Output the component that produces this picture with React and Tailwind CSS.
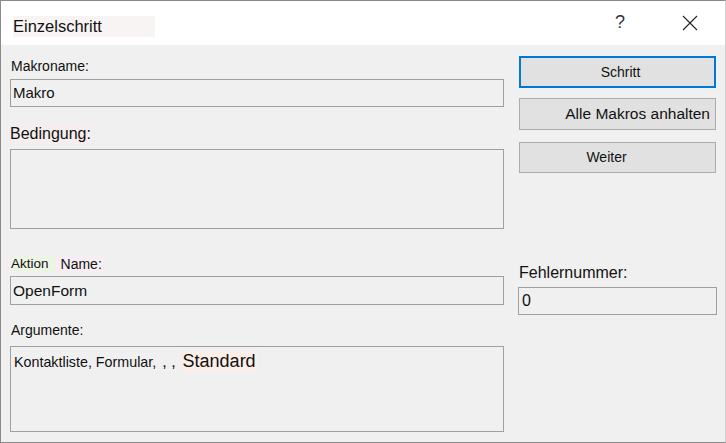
export default function App() {
  const font = { fontFamily: '"Liberation Sans", Arial, sans-serif' }
  return (
    <div
      className="w-[726px] h-[443px] bg-[#f0f0f0] border border-[#8a8a8a] border-r-[#d0d0d0] flex flex-col overflow-hidden text-[#111]"
      style={font}
    >
      {/* Title bar */}
      <div className="h-[44px] shrink-0 bg-white flex items-center">
        <div className="ml-[12px] mt-[6px] h-[21px] w-[142px] bg-[#f8f4f4] flex items-center">
          <span className="text-[16.5px] leading-none">Einzelschritt</span>
        </div>
        <span className="ml-auto mt-[-2px] text-[18px] leading-none text-[#333]">?</span>
        <svg className="ml-[57px] mr-[27px]" width="16" height="16" viewBox="0 0 16 16">
          <path d="M1 1 L15 15 M15 1 L1 15" stroke="#222" strokeWidth="1.1" />
        </svg>
      </div>

      {/* Body */}
      <div className="flex flex-1">
        {/* Left column */}
        <div className="ml-[9px] w-[494px] flex flex-col">
          <div className="mt-[13px] h-[16px] text-[14px] leading-[16px] ml-[1px]">Makroname:</div>
          <div className="mt-[5px] h-[28px] border border-[#a0a0a0] flex items-center px-[2px]">
            <span className="text-[15px]">Makro</span>
          </div>

          <div className="mt-[18px] h-[18px] text-[16px] leading-[18px] w-fit bg-[#f6eeee]">Bedingung:</div>
          <div className="mt-[6px] h-[80px] border border-[#a0a0a0]" />

          <div className="mt-[27px] h-[16px] text-[13.5px] leading-[16px] ml-[1px] flex">
            <span className="bg-[#ecf4e4] pr-[7px]">Aktion</span>
            <span className="bg-[#f7eef3] pl-[5px] pr-[3px] text-[14px]">Name:</span>
          </div>
          <div className="mt-[4px] h-[29px] border border-[#a0a0a0] flex items-center px-[2px]">
            <span className="text-[15.5px]">OpenForm</span>
          </div>

          <div className="mt-[17px] h-[16px] text-[14px] leading-[16px] ml-[1px]">Argumente:</div>
          <div className="mt-[8px] h-[86px] border border-[#a0a0a0] px-[3px] pt-[4px]">
            <div className="flex items-baseline leading-[20px]">
              <span className="text-[14.3px]">Kontaktliste, Formular,</span>
              <span className="text-[16px] ml-[6px]">, ,</span>
              <span className="text-[18px] ml-[7px] bg-[#fbefe8] pr-[1px]">Standard</span>
            </div>
          </div>
        </div>

        {/* Right column */}
        <div className="ml-[15px] w-[197px] flex flex-col">
          <button className="mt-[11px] h-[32px] border-2 border-[#0078d7] bg-[#e1e1e1] text-[14px] flex items-center justify-center pl-[6px]">
            Schritt
          </button>
          <button className="mt-[10px] h-[32px] border border-[#adadad] bg-[#e1e1e1] text-[15.5px] flex items-center justify-end pr-[5px]">
            Alle Makros anhalten
          </button>
          <button className="mt-[12px] h-[31px] border border-[#adadad] bg-[#e1e1e1] text-[14px] flex items-center justify-center pr-[22px]">
            Weiter
          </button>

          <div className="mt-[91px] h-[18px] text-[16px] leading-[18px]">Fehlernummer:</div>
          <div className="mt-[5px] h-[28px] -ml-[1px] w-[199px] border border-[#a0a0a0] flex items-center px-[3px]">
            <span className="text-[16px]">0</span>
          </div>
        </div>
      </div>
    </div>
  )
}
